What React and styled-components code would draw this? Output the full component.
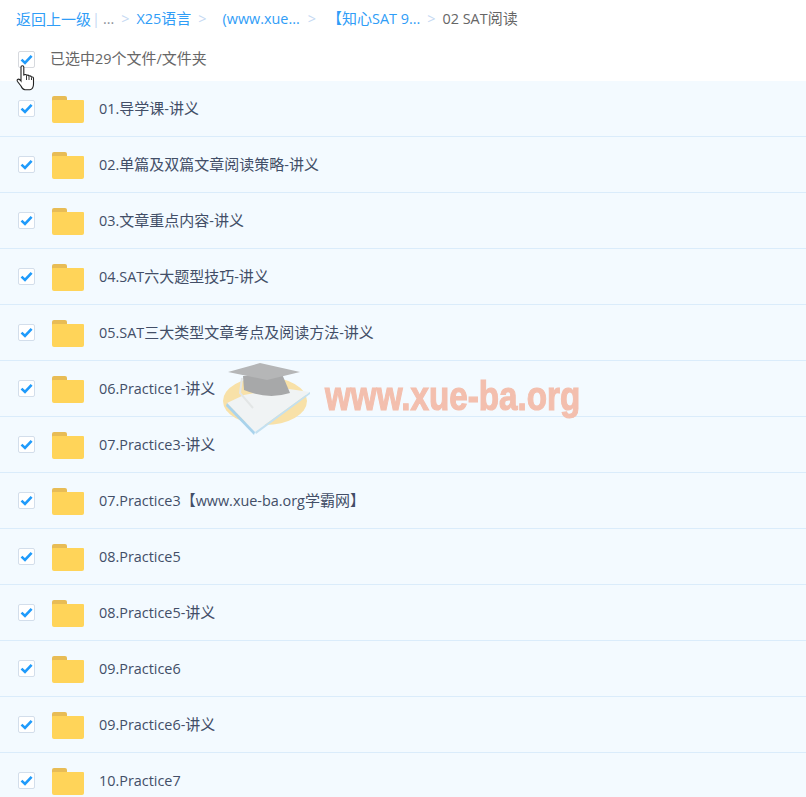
import React from "react";
import styled, { createGlobalStyle } from "styled-components";

const Global = createGlobalStyle`
  html, body { margin: 0; padding: 0; background: #fff; }
  body { font-family: "Noto Sans CJK SC", sans-serif; overflow: hidden; }
`;

const Page = styled.div`
  position: relative;
  width: 806px;
  height: 797px;
  overflow: hidden;
`;

const Crumbs = styled.nav`
  display: flex;
  align-items: center;
  height: 37px;
  padding: 0 0 1px 16px;
  font-size: 15px;
  line-height: 20px;
  white-space: nowrap;
  color: #666;
`;

const Latin = styled.span`
  font-family: "Open Sans", sans-serif;
  font-size: 14.4px;
`;

const CrumbLink = styled.span`
  color: #2f9df7;
`;

const Pipe = styled.span`
  color: #c5d9f3;
  margin: 0 3px 0 1px;
`;

const Muted = styled.span`
  color: #8d9199;
`;

const Sep = styled.span`
  color: #c5d9f3;
  margin: 0 ${(p) => p.$right ?? 7}px 0 ${(p) => p.$left ?? 7}px;
`;

const Current = styled.span`
  color: #666;
`;

const SelectBar = styled.div`
  display: flex;
  align-items: center;
  height: 43px;
  padding-left: 18px;
  font-size: 15px;
  line-height: 20px;
  color: #666;
`;

const SelectText = styled.span`
  margin: -2px 0 0 15px;
`;

const Box = styled.span`
  position: relative;
  display: flex;
  align-items: center;
  justify-content: center;
  flex: none;
  width: 15px;
  height: 15px;
  background: #fff;
  border: 1px solid ${(p) => (p.$top ? "#d6d9de" : "#d3deeb")};
  border-radius: 2px;
`;

const List = styled.ul`
  list-style: none;
  margin: 0;
  padding: 0;
  background: #f3faff;
`;

const Row = styled.li`
  display: flex;
  align-items: center;
  height: 55px;
  padding-left: 18px;
  border-bottom: 1px solid #daecfb;
`;

const FolderSlot = styled.span`
  display: flex;
  margin: 1px 0 0 17px;
`;

const Name = styled.span`
  margin-left: 15px;
  font-size: 15px;
  line-height: 20px;
  color: #424e67;
  white-space: nowrap;
`;

const Cursor = styled.svg`
  position: absolute;
  left: 16px;
  top: 65px;
`;

const Watermark = styled.div`
  position: absolute;
  left: 222px;
  top: 362px;
  display: flex;
  align-items: flex-start;
  pointer-events: none;
`;

const WaterText = styled.span`
  margin: 2px 0 0 15px;
  font-family: "Liberation Sans", sans-serif;
  font-weight: 700;
  font-size: 41px;
  line-height: 64px;
  color: #f3bfae;
  white-space: nowrap;
  transform: scaleX(0.81);
  transform-origin: left center;
  -webkit-text-stroke: 1.2px #f3bfae;
  filter: blur(0.4px);
`;

const Mixed = ({ text }) =>
  text.split(/([\x00-\x7f]+)/).map((part, i) =>
    /^[\x00-\x7f]+$/.test(part) ? <Latin key={i}>{part}</Latin> : part
  );

const Check = () => (
  <svg width="13" height="11" viewBox="0 0 13 11">
    <path d="M1.5 5.6 L5 9 L11.6 1.8" fill="none" stroke="#1f9bfb" strokeWidth="2.6" />
  </svg>
);

const Folder = () => (
  <svg width="32" height="27" viewBox="0 0 32 27">
    <path d="M0 2 Q0 0 2 0 H13 Q15 0 15 2 V6 H0 Z" fill="#e8bc55" />
    <path d="M0 5 Q0 4 1 4 H14 L16 4 H31 Q32 4 32 5 V25 Q32 27 30 27 H2 Q0 27 0 25 Z" fill="#ffd459" />
  </svg>
);

const Cap = () => (
  <svg width="88" height="74" viewBox="0 0 88 74">
    <ellipse cx="43" cy="39" rx="42" ry="24" fill="#f8e1a8" />
    <path d="M5 41 L22 33 L60 26 L88 30 L33 70 Z" fill="#f0f3f4" />
    <path d="M5 41 L33 70 L32 73 L4 44 Z" fill="#a9d3ec" />
    <path d="M33 70 L88 30 L88 32 L34 72 Z" fill="#c3e0f0" />
    <path d="M21 14 L22 28 Q46 38 68 31 L60 12 Z" fill="#a7a8a9" />
    <path d="M6 10 L38 1 L78 10 L45 18 Z" fill="#b5b6b7" />
    <path d="M20 16 L18 31 L31 46" fill="none" stroke="#e3e6e6" strokeWidth="2" />
  </svg>
);

const Hand = () => (
  <Cursor width="20" height="26" viewBox="0 0 20 26">
    <path
      d="M5 2 Q5 0.7 6.4 0.7 Q7.8 0.7 7.8 2 V10 Q10 9 10.5 10.3 Q12.5 9.6 13 11 Q15 10.4 15.5 12 Q17.5 11.6 17.5 13.5 V19 Q17.5 24 14 24.8 H9 Q6.5 24.5 5 21 L1.5 16.5 Q0.6 14.8 2 14.2 Q3.5 13.8 5 16 Z"
      fill="#fff"
      stroke="#222"
      strokeWidth="1.1"
    />
    <path d="M10.5 11 V15 M13 11.5 V15 M15.5 12.5 V15" stroke="#222" strokeWidth="0.9" fill="none" />
  </Cursor>
);

const files = [
  "01.导学课-讲义",
  "02.单篇及双篇文章阅读策略-讲义",
  "03.文章重点内容-讲义",
  "04.SAT六大题型技巧-讲义",
  "05.SAT三大类型文章考点及阅读方法-讲义",
  "06.Practice1-讲义",
  "07.Practice3-讲义",
  "07.Practice3【www.xue-ba.org学霸网】",
  "08.Practice5",
  "08.Practice5-讲义",
  "09.Practice6",
  "09.Practice6-讲义",
  "10.Practice7",
];

export default function App() {
  return (
    <Page>
      <Global />
      <Crumbs>
        <CrumbLink>返回上一级</CrumbLink>
        <Pipe><Latin>|</Latin></Pipe>
        <Muted><Latin>...</Latin></Muted>
        <Sep><Latin>&gt;</Latin></Sep>
        <CrumbLink><Mixed text="X25语言" /></CrumbLink>
        <Sep $right={16}><Latin>&gt;</Latin></Sep>
        <CrumbLink><Latin>(www.xue...</Latin></CrumbLink>
        <Sep $left={8} $right={11}><Latin>&gt;</Latin></Sep>
        <CrumbLink><Mixed text="【知心SAT 9..." /></CrumbLink>
        <Sep><Latin>&gt;</Latin></Sep>
        <Current><Mixed text="02 SAT阅读" /></Current>
      </Crumbs>
      <SelectBar>
        <Box $top>
          <Check />
        </Box>
        <SelectText><Mixed text="已选中29个文件/文件夹" /></SelectText>
      </SelectBar>
      <List>
        {files.map((f) => (
          <Row key={f}>
            <Box>
              <Check />
            </Box>
            <FolderSlot>
              <Folder />
            </FolderSlot>
            <Name><Mixed text={f} /></Name>
          </Row>
        ))}
      </List>
      <Hand />
      <Watermark>
        <Cap />
        <WaterText>www.xue-ba.org</WaterText>
      </Watermark>
    </Page>
  );
}
